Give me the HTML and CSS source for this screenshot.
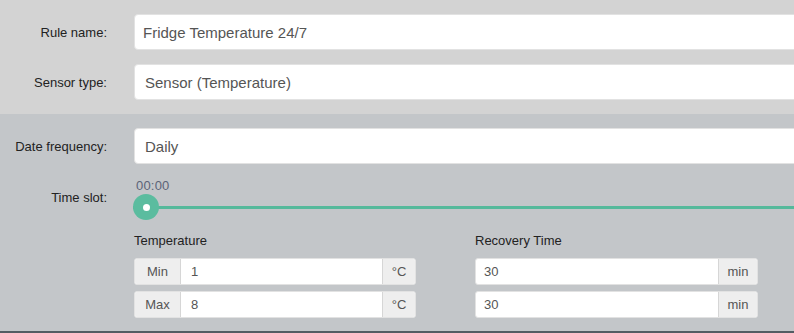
FILE: index.html
```html
<!DOCTYPE html>
<html>
<head>
<meta charset="utf-8">
<link rel="stylesheet" href="styles.css">
</head>
<body>
<div class="page">
  <section class="sec sec-top">
    <div class="row">
      <label class="label">Rule name:</label>
      <div class="field field-name">Fridge Temperature 24/7</div>
    </div>
    <div class="row">
      <label class="label">Sensor type:</label>
      <div class="field">Sensor (Temperature)</div>
    </div>
  </section>
  <section class="sec sec-main">
    <div class="row">
      <label class="label">Date frequency:</label>
      <div class="field">Daily</div>
    </div>
    <div class="row row-slot">
      <label class="label label-slot">Time slot:</label>
      <div class="slider">
        <div class="slider-value">00:00</div>
        <div class="track">
          <div class="track-line"></div>
          <div class="knob"></div>
        </div>
      </div>
    </div>
    <div class="thresholds">
      <div class="col">
        <div class="col-title">Temperature</div>
        <div class="group">
          <span class="addon addon-name">Min</span>
          <span class="gval">1</span>
          <span class="addon addon-unit">°C</span>
        </div>
        <div class="group">
          <span class="addon addon-name">Max</span>
          <span class="gval">8</span>
          <span class="addon addon-unit">°C</span>
        </div>
      </div>
      <div class="col">
        <div class="col-title">Recovery Time</div>
        <div class="group">
          <span class="gval gval-first">30</span>
          <span class="addon addon-min">min</span>
        </div>
        <div class="group">
          <span class="gval gval-first">30</span>
          <span class="addon addon-min">min</span>
        </div>
      </div>
    </div>
  </section>
</div>
</body>
</html>
```

FILE: styles.css
```css
html, body {
  margin: 0;
  padding: 0;
  overflow: hidden;
}
body {
  font-family: "Liberation Sans", Arial, sans-serif;
  font-size: 13px;
  color: #222;
  background: #c3c6c9;
}
.page {
  width: 1000px;
}
.sec-top {
  background: #d3d3d3;
  padding: 14px 0 14px;
}
.sec-main {
  background: #c3c6c9;
  padding: 14px 0 13px;
  border-bottom: 2px solid #545c63;
}
.row {
  display: flex;
  align-items: center;
  gap: 27px;
}
.row + .row {
  margin-top: 14px;
}
.label {
  width: 107px;
  flex: none;
  text-align: right;
  color: #222;
  font-size: 13px;
}
.field {
  flex: 1;
  height: 36px;
  box-sizing: border-box;
  background: #fff;
  border: 1px solid #e2e2e2;
  border-radius: 4px;
  padding: 0 10px;
  display: flex;
  align-items: center;
  font-size: 15px;
  color: #555;
}
.field-name {
  padding-left: 8px;
}
.row-slot {
  align-items: flex-start;
}
.label-slot {
  padding-top: 12px;
}
.slider {
  flex: 1;
  margin-left: -1px;
}
.slider-value {
  height: 16px;
  line-height: 16px;
  padding-left: 3px;
  font-size: 13px;
  letter-spacing: 0.2px;
  color: #5b6377;
}
.track {
  position: relative;
  height: 26px;
}
.track-line {
  position: absolute;
  left: 0;
  right: 0;
  top: 12px;
  height: 3px;
  background: #55b99b;
}
.knob {
  position: absolute;
  left: 0;
  top: 0;
  width: 26px;
  height: 26px;
  border-radius: 50%;
  background: #5bbc9f;
}
.knob::after {
  content: "";
  position: absolute;
  left: 10px;
  top: 10px;
  width: 7px;
  height: 7px;
  border-radius: 50%;
  background: #fff;
}
.thresholds {
  display: grid;
  grid-template-columns: 282px 283px;
  column-gap: 59px;
  margin-left: 134px;
  margin-top: 13px;
}
.col-title {
  line-height: 16px;
  font-size: 13px;
  color: #222;
  margin-bottom: 9px;
}
.group {
  display: flex;
  height: 27px;
  box-sizing: border-box;
  border: 1px solid #e2e2e2;
  border-radius: 3px;
  background: #fff;
  overflow: hidden;
  font-size: 13px;
}
.group + .group {
  margin-top: 6px;
}
.addon {
  background: #eeeeee;
  color: #555;
  display: flex;
  align-items: center;
  justify-content: center;
  flex: none;
}
.addon-name {
  width: 45px;
  border-right: 1px solid #d6d6d6;
}
.addon-unit {
  width: 32px;
  border-left: 1px solid #d6d6d6;
}
.addon-min {
  width: 38px;
  border-left: 1px solid #d6d6d6;
}
.gval {
  flex: 1;
  display: flex;
  align-items: center;
  padding-left: 10px;
  color: #555;
}
.gval-first {
  padding-left: 8px;
}
```
